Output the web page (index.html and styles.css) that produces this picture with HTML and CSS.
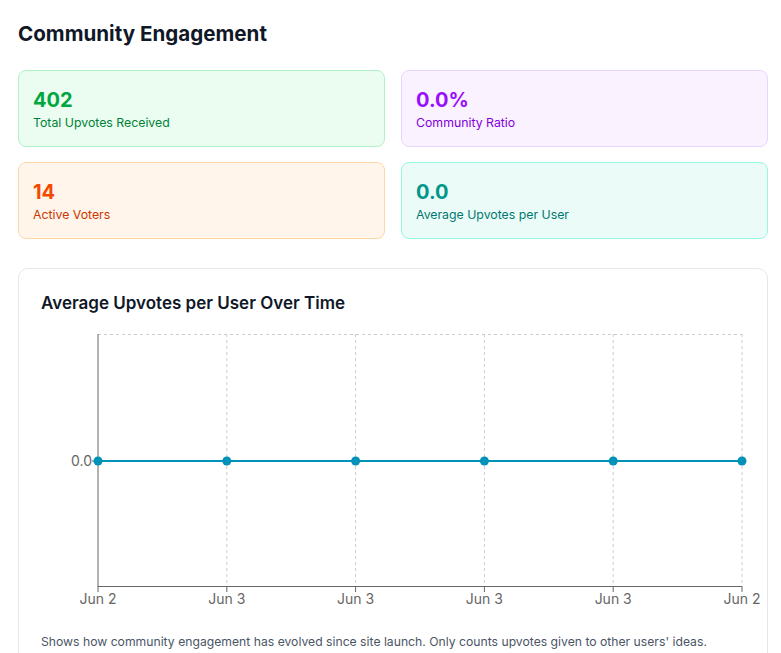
FILE: index.html
```html
<!DOCTYPE html>
<html lang="en">
<head>
<meta charset="utf-8">
<title>Community Engagement</title>
<link rel="stylesheet" href="styles.css">
</head>
<body>
<main class="page">
  <h1 class="page-title">Community Engagement</h1>
  <section class="stats">
    <div class="stat stat-green">
      <div class="stat-value">402</div>
      <div class="stat-label">Total Upvotes Received</div>
    </div>
    <div class="stat stat-purple">
      <div class="stat-value">0.0%</div>
      <div class="stat-label">Community Ratio</div>
    </div>
    <div class="stat stat-orange">
      <div class="stat-value">14</div>
      <div class="stat-label">Active Voters</div>
    </div>
    <div class="stat stat-teal">
      <div class="stat-value">0.0</div>
      <div class="stat-label">Average Upvotes per User</div>
    </div>
  </section>
  <section class="chart-card">
    <h2 class="chart-title">Average Upvotes per User Over Time</h2>
    <svg class="chart" width="704" height="280" viewBox="0 0 704 280">
      <g class="grid" stroke="#cccccc" stroke-dasharray="3 3" fill="none">
        <line x1="57" y1="0.5" x2="701" y2="0.5"/>
        <line x1="185.8" y1="0" x2="185.8" y2="252"/>
        <line x1="314.6" y1="0" x2="314.6" y2="252"/>
        <line x1="443.4" y1="0" x2="443.4" y2="252"/>
        <line x1="572.2" y1="0" x2="572.2" y2="252"/>
        <line x1="701" y1="0" x2="701" y2="252"/>
      </g>
      <g class="axis" stroke="#666666" fill="none">
        <line x1="57" y1="0" x2="57" y2="252.5"/>
        <line x1="57" y1="252.5" x2="701" y2="252.5"/>
        <line x1="51" y1="127" x2="57" y2="127"/>
        <line x1="57" y1="252" x2="57" y2="258"/>
        <line x1="185.8" y1="252" x2="185.8" y2="258"/>
        <line x1="314.6" y1="252" x2="314.6" y2="258"/>
        <line x1="443.4" y1="252" x2="443.4" y2="258"/>
        <line x1="572.2" y1="252" x2="572.2" y2="258"/>
        <line x1="701" y1="252" x2="701" y2="258"/>
      </g>
      <g class="ticks" fill="#666666">
        <text x="51" y="132" text-anchor="end">0.0</text>
        <text x="57" y="270" text-anchor="middle">Jun 2</text>
        <text x="185.8" y="270" text-anchor="middle">Jun 3</text>
        <text x="314.6" y="270" text-anchor="middle">Jun 3</text>
        <text x="443.4" y="270" text-anchor="middle">Jun 3</text>
        <text x="572.2" y="270" text-anchor="middle">Jun 3</text>
        <text x="701" y="270" text-anchor="middle">Jun 2</text>
      </g>
      <polyline points="57,127 185.8,127 314.6,127 443.4,127 572.2,127 701,127" fill="none" stroke="#0092b8" stroke-width="2"/>
      <g fill="#0092b8">
        <circle cx="57" cy="127" r="4.5"/>
        <circle cx="185.8" cy="127" r="4.5"/>
        <circle cx="314.6" cy="127" r="4.5"/>
        <circle cx="443.4" cy="127" r="4.5"/>
        <circle cx="572.2" cy="127" r="4.5"/>
        <circle cx="701" cy="127" r="4.5"/>
      </g>
    </svg>
    <p class="chart-note">Shows how community engagement has evolved since site launch. Only counts upvotes given to other users' ideas.</p>
  </section>
</main>
</body>
</html>
```
FILE: styles.css
```css
* { box-sizing: border-box; }
html, body { margin: 0; padding: 0; background: #ffffff; }
body {
  font-family: Inter, "Noto Sans", "Liberation Sans", sans-serif;
  color: #101828;
}
.page {
  padding: 20px 13px 0 18px;
}
.page-title {
  margin: 0 0 22px;
  font-size: 20.6px;
  line-height: 28px;
  font-weight: 700;
  color: #101828;
}
.stats {
  display: grid;
  grid-template-columns: 1fr 1fr;
  column-gap: 16px;
  row-gap: 15px;
}
.stat {
  border: 1px solid;
  border-radius: 8px;
  padding: 14px 14px 14px 14px;
  height: 77px;
}
.stat-value {
  font-size: 20px;
  line-height: 28px;
  font-weight: 700;
  margin-top: 1px;
}
.stat-label {
  font-size: 12.3px;
  line-height: 16px;
  margin-top: 1px;
}
.stat-green { background: #ebfcf1; border-color: #b1f2c9; }
.stat-green .stat-value { color: #00a63e; }
.stat-green .stat-label { color: #008236; }
.stat-purple { background: #faf3ff; border-color: #e9d4ff; }
.stat-purple .stat-value { color: #9810fa; }
.stat-purple .stat-label { color: #8200db; }
.stat-orange { background: #fff5eb; border-color: #ffd6a7; }
.stat-orange .stat-value { color: #f54900; }
.stat-orange .stat-label { color: #ca3500; }
.stat-teal { background: #ebfbf8; border-color: #96f7e4; }
.stat-teal .stat-value { color: #009689; }
.stat-teal .stat-label { color: #00786f; }

.chart-card {
  margin-top: 29px;
  border: 1px solid #e5e7eb;
  border-radius: 10px;
  padding: 20px 22px 22px 22px;
}
.chart-title {
  margin: 0 0 17px;
  font-size: 17px;
  line-height: 28px;
  font-weight: 600;
  color: #101828;
}
.chart {
  display: block;
  overflow: visible;
}
.ticks text {
  font-family: Inter, "Liberation Sans", sans-serif;
  font-size: 14px;
}
.chart-note {
  margin: 20px 0 0;
  font-size: 12.2px;
  line-height: 16px;
  color: #4a5565;
}
```
